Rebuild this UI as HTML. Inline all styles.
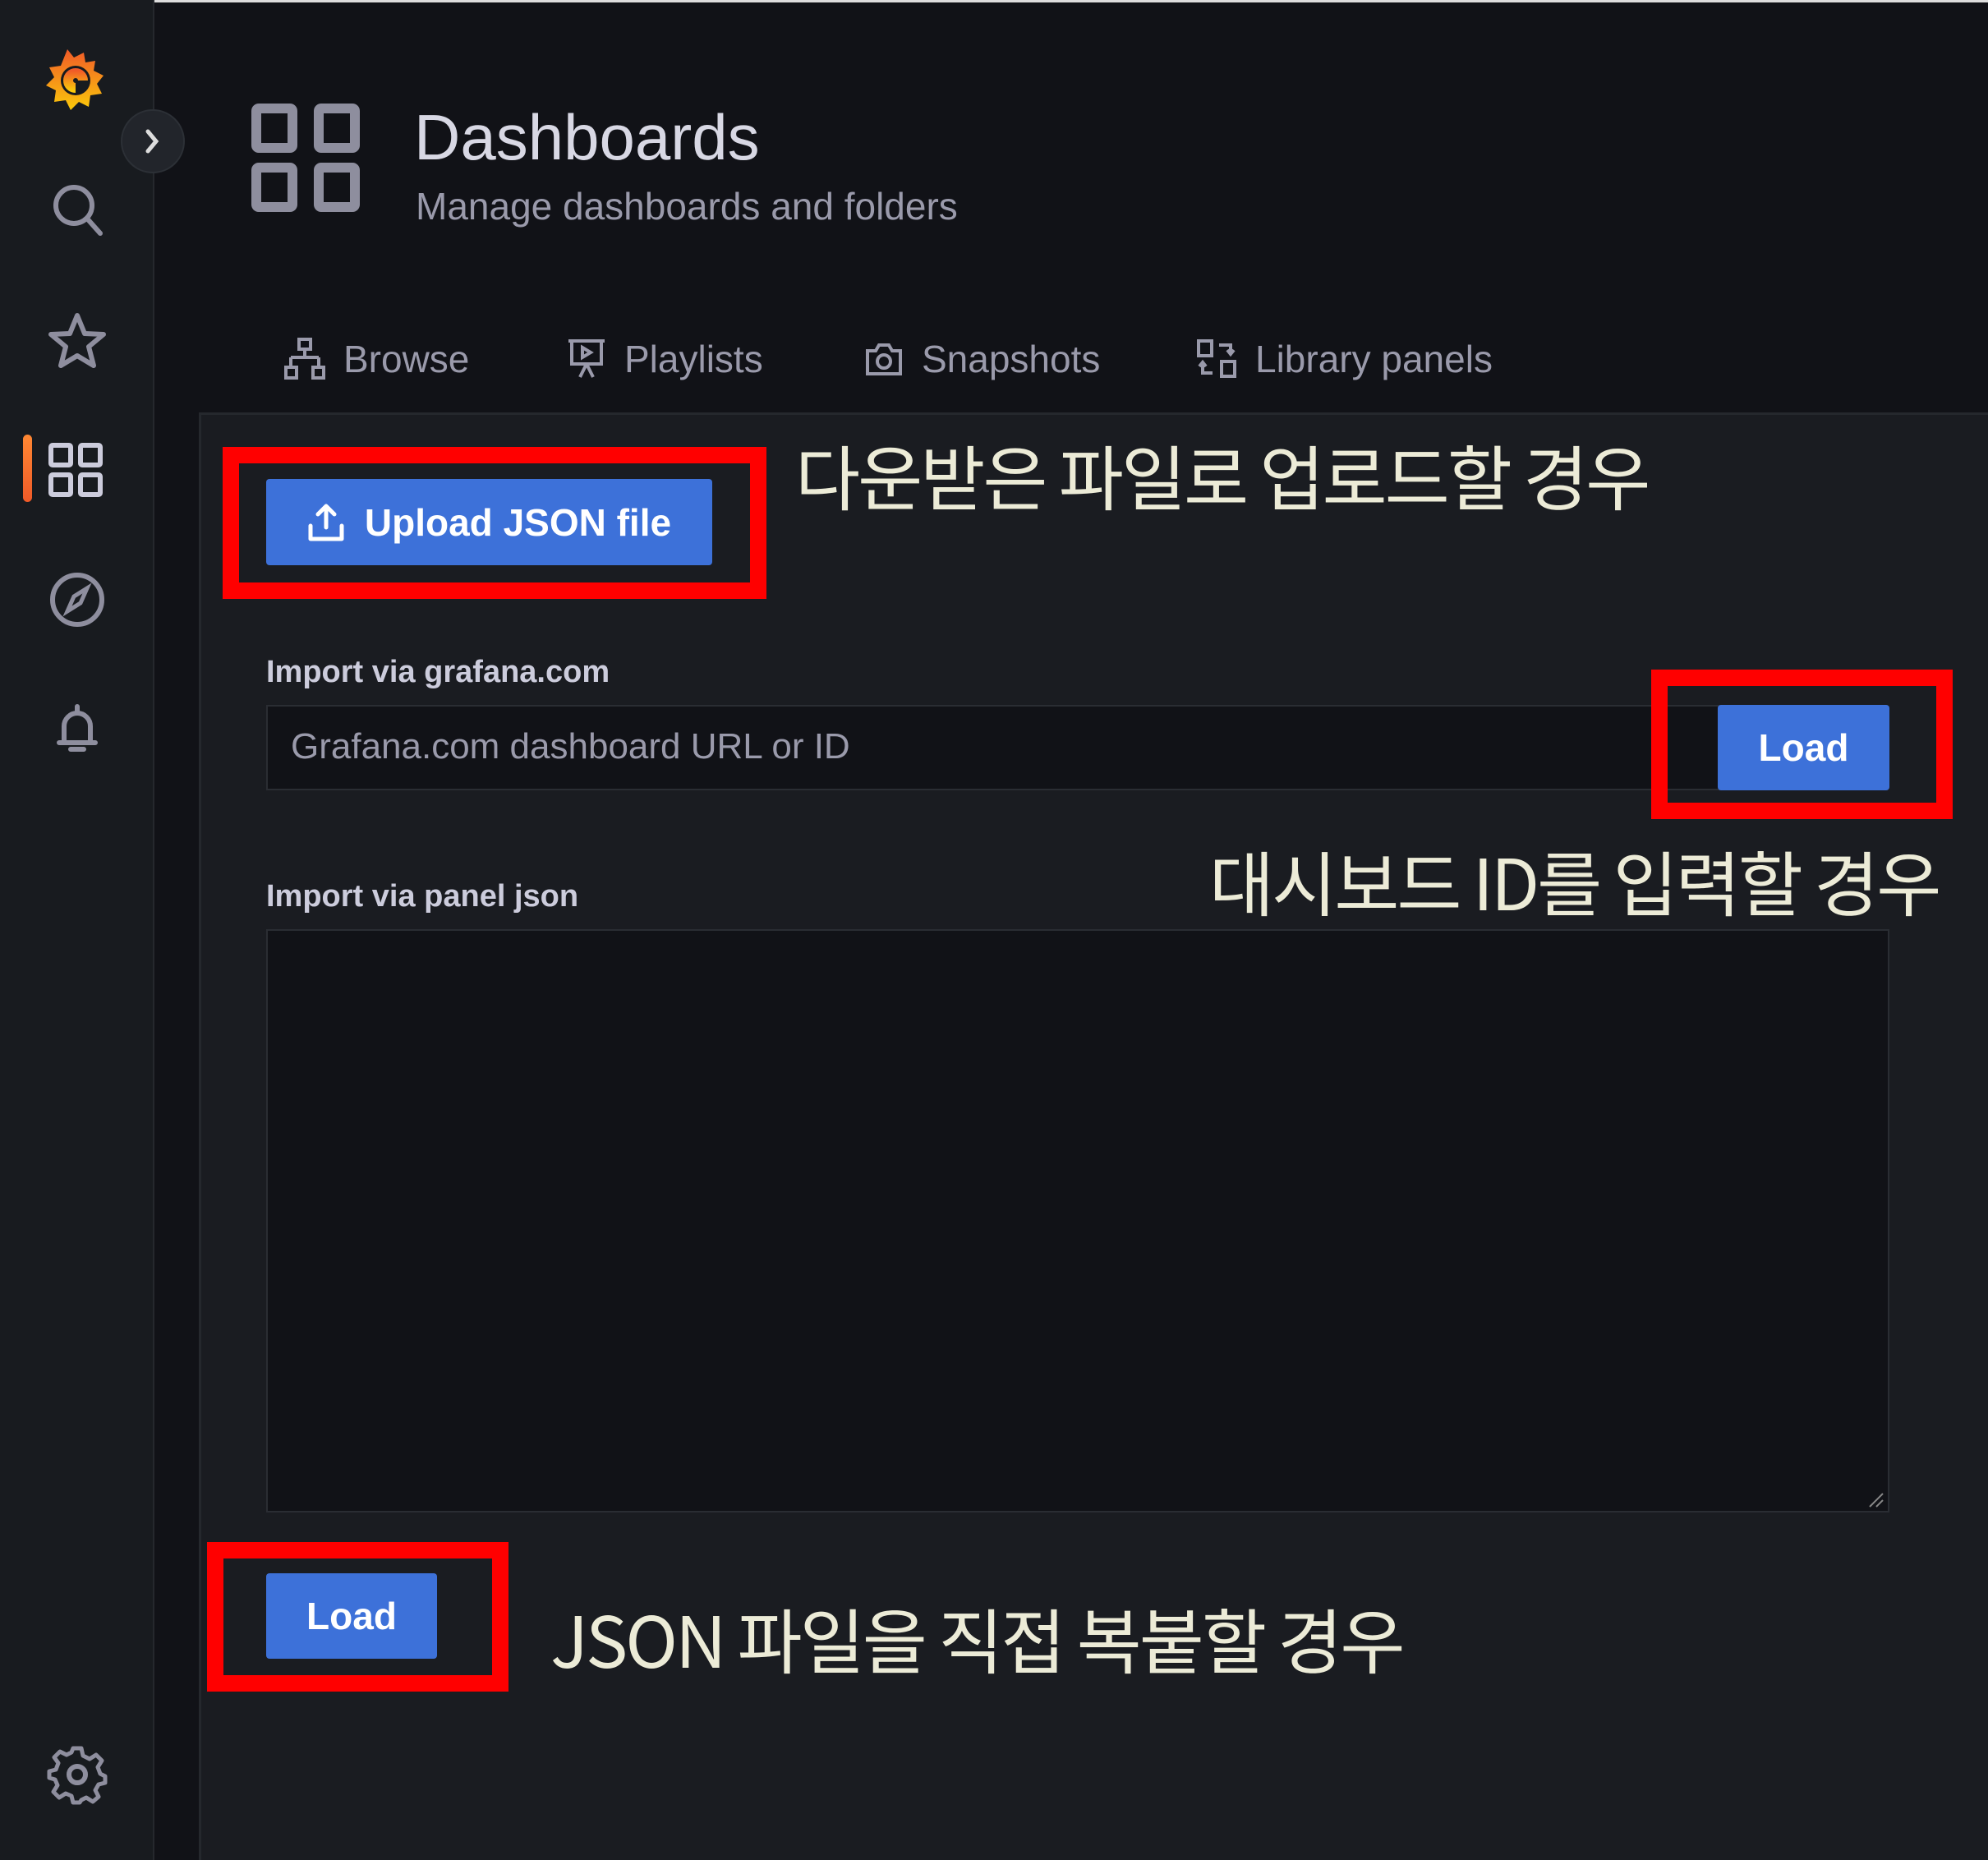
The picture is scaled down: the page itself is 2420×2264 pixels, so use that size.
<!DOCTYPE html>
<html><head><meta charset="utf-8"><style>
*{box-sizing:border-box;margin:0;padding:0}
body{width:2420px;height:2264px;background:#111217;font-family:"Liberation Sans","Noto Sans CJK KR",sans-serif;position:relative;overflow:hidden;color:#ccccdc}
.abs{position:absolute}
.side{left:0;top:0;width:188px;height:2264px;background:#181b1f;border-right:2px solid #25282d}
.panel{left:242px;top:502px;width:2178px;height:1762px;background:#1a1c21;border-top:3px solid #25282d;border-left:3px solid #25282d}
.kr{font-family:"Noto Sans CJK KR","NanumGothic",sans-serif;color:#ecebd7;font-size:86px;line-height:1;white-space:nowrap;letter-spacing:-3px}
.red{border:20px solid #ff0000}
.btn{background:#3d71d9;color:#fff;font-weight:bold;border-radius:4px;display:flex;align-items:center;justify-content:center}
.tab{top:410px;font-size:46px;color:#9a9aab;display:flex;align-items:center;gap:22px;white-space:nowrap}
.lbl{font-size:38px;font-weight:bold;color:#ccccdc}
</style></head><body>
<div class="abs" style="left:0;top:0;width:2420px;height:3px;background:#ddd"></div>
<div class="abs side"></div>
<svg class="abs" style="left:52px;top:56px" width="82" height="82" viewBox="0 0 82 82">
<defs><linearGradient id="g" x1="0" y1="0" x2="0" y2="1"><stop offset="0" stop-color="#f05a28"/><stop offset="1" stop-color="#fbca0a"/></linearGradient></defs>
<path d="M30 4 L38 14 L50 8 L52 20 L64 18 L62 30 L74 36 L66 46 L72 58 L58 60 L56 74 L44 68 L34 78 L28 66 L14 68 L16 54 L4 48 L14 38 L8 26 L22 24 Z" fill="url(#g)"/>
<circle cx="40" cy="42" r="18" fill="#181b1f"/>
<path d="M40 54 A12 12 0 1 1 52 42 M40 48 A6 6 0 1 1 46 42" stroke="url(#g)" stroke-width="6" fill="none"/>
</svg>
<div class="abs" style="left:147px;top:133px;width:78px;height:78px;border-radius:50%;background:#22252b;border:2px solid #2c3036"></div>
<svg class="abs" style="left:170px;top:154px" width="30" height="36" viewBox="0 0 30 36"><path d="M10 6 L20 18 L10 30" stroke="#ddd" stroke-width="5" fill="none" stroke-linecap="round"/></svg>
<svg class="abs" style="left:56px;top:216px" width="76" height="76" viewBox="0 0 76 76"><circle cx="34" cy="34" r="22" stroke="#8e8e9e" stroke-width="6" fill="none"/><path d="M50 50 L66 68" stroke="#8e8e9e" stroke-width="6" stroke-linecap="round"/></svg>
<svg class="abs" style="left:56px;top:378px" width="76" height="76" viewBox="0 0 76 76"><path d="M38 6 L47 28 L70 29 L52 44 L58 67 L38 55 L18 67 L24 44 L6 29 L29 28 Z" stroke="#8e8e9e" stroke-width="6" fill="none" stroke-linejoin="round"/></svg>
<div class="abs" style="left:28px;top:529px;width:11px;height:82px;border-radius:6px;background:linear-gradient(#ff8833,#f05a28)"></div>
<svg class="abs" style="left:58px;top:538px" width="70" height="70" viewBox="0 0 70 70"><g stroke="#ccccdc" stroke-width="6" fill="none"><rect x="4" y="4" width="24" height="24" rx="2"/><rect x="40" y="4" width="24" height="24" rx="2"/><rect x="4" y="40" width="24" height="24" rx="2"/><rect x="40" y="40" width="24" height="24" rx="2"/></g></svg>
<svg class="abs" style="left:56px;top:692px" width="76" height="76" viewBox="0 0 76 76"><circle cx="38" cy="38" r="30" stroke="#8e8e9e" stroke-width="6" fill="none"/><path d="M50 24 L42 42 L26 52 L34 34 Z" stroke="#8e8e9e" stroke-width="5" fill="none"/></svg>
<svg class="abs" style="left:56px;top:850px" width="76" height="76" viewBox="0 0 76 76"><path d="M16 54 L60 54 M22 54 L22 34 A16 16 0 0 1 54 34 L54 54 M38 10 L38 18 M30 62 L46 62" stroke="#8e8e9e" stroke-width="6" fill="none" stroke-linecap="round"/></svg>
<svg class="abs" style="left:56px;top:2122px" width="76" height="76" viewBox="0 0 76 76"><circle cx="38" cy="38" r="10" stroke="#8e8e9e" stroke-width="6" fill="none"/><path d="M33 6 L43 6 L45 15 L53 19 L61 14 L68 21 L63 29 L66 37 L72 40 L72 48 L64 50 L60 57 L64 65 L57 71 L49 66 L43 69 L41 72 L33 72 L31 64 L24 61 L16 66 L9 59 L14 51 L11 44 L4 42 L4 34 L12 32 L15 24 L10 17 L17 10 L25 14 L31 11 Z" stroke="#8e8e9e" stroke-width="5" fill="none" stroke-linejoin="round"/></svg>

<svg class="abs" style="left:306px;top:126px" width="134" height="134" viewBox="0 0 134 134"><g stroke="#8e8e9e" stroke-width="12" fill="none"><rect x="6" y="6" width="44" height="48" rx="3"/><rect x="82" y="6" width="44" height="48" rx="3"/><rect x="6" y="78" width="44" height="48" rx="3"/><rect x="82" y="78" width="44" height="48" rx="3"/></g></svg>
<div class="abs" style="left:504px;top:122px;font-size:78px;color:#d8d8e4;white-space:nowrap">Dashboards</div>
<div class="abs" style="left:506px;top:224px;font-size:46px;color:#9a9aab;white-space:nowrap">Manage dashboards and folders</div>

<div class="abs tab" style="left:346px"><svg width="50" height="52" viewBox="0 0 50 52"><g stroke="#9a9aab" stroke-width="4" fill="none"><rect x="18" y="2" width="14" height="12"/><path d="M25 14 V24 M8 24 H42 M8 24 V34 M42 24 V34"/><rect x="2" y="36" width="13" height="13"/><rect x="35" y="36" width="13" height="13"/></g></svg>Browse</div>
<div class="abs tab" style="left:690px"><svg width="48" height="52" viewBox="0 0 48 52"><g stroke="#9a9aab" stroke-width="4" fill="none"><path d="M2 4 H46 M6 4 V32 H42 V4 M24 32 L16 48 M24 32 L32 48"/><path d="M19 12 L29 18 L19 24 Z"/></g></svg>Playlists</div>
<div class="abs tab" style="left:1052px"><svg width="48" height="44" viewBox="0 0 48 44"><g stroke="#9a9aab" stroke-width="4" fill="none"><path d="M4 12 H14 L18 5 H30 L34 12 H44 V40 H4 Z"/><circle cx="24" cy="25" r="8"/></g></svg>Snapshots</div>
<div class="abs tab" style="left:1456px"><svg width="50" height="50" viewBox="0 0 50 50"><g stroke="#9a9aab" stroke-width="4" fill="none"><rect x="3" y="3" width="16" height="18"/><rect x="31" y="28" width="16" height="18"/><path d="M28 8 H42 V18 M38 14 L42 19 L46 14 M20 42 H8 V30 M4 34 L8 29 L12 34"/></g></svg>Library panels</div>

<div class="abs panel"></div>

<div class="abs red" style="left:271px;top:544px;width:662px;height:185px"></div>
<div class="abs btn" style="left:324px;top:583px;width:543px;height:105px;font-size:46px;gap:24px"><svg width="46" height="48" viewBox="0 0 46 48"><path d="M23 30 V4 M13 14 L23 4 L33 14 M4 28 V44 H42 V28" stroke="#fff" stroke-width="5" fill="none" stroke-linecap="round" stroke-linejoin="round"/></svg>Upload JSON file</div>
<div class="abs kr" style="left:968px;top:534px">다운받은 파일로 업로드할 경우</div>

<div class="abs lbl" style="left:324px;top:797px">Import via grafana.com</div>
<div class="abs" style="left:324px;top:858px;width:1770px;height:104px;background:#111217;border:2px solid #2a2d33"></div>
<div class="abs" style="left:354px;top:884px;font-size:44px;color:#9a9aab;white-space:nowrap">Grafana.com dashboard URL or ID</div>
<div class="abs btn" style="left:2091px;top:858px;width:209px;height:104px;font-size:46px">Load</div>
<div class="abs red" style="left:2010px;top:815px;width:367px;height:182px"></div>
<div class="abs kr" style="left:1472px;top:1028px">대시보드 ID를 입력할 경우</div>

<div class="abs lbl" style="left:324px;top:1070px">Import via panel json</div>
<div class="abs" style="left:324px;top:1131px;width:1976px;height:710px;background:#111217;border:2px solid #2a2d33"></div>
<svg class="abs" style="left:2272px;top:1814px" width="22" height="22"><path d="M4 20 L20 4 M12 20 L20 12" stroke="#888" stroke-width="2"/></svg>

<div class="abs red" style="left:252px;top:1877px;width:367px;height:182px"></div>
<div class="abs btn" style="left:324px;top:1915px;width:208px;height:104px;font-size:46px">Load</div>
<div class="abs kr" style="left:670px;top:1950px">JSON 파일을 직접 복붙할 경우</div>
</body></html>
